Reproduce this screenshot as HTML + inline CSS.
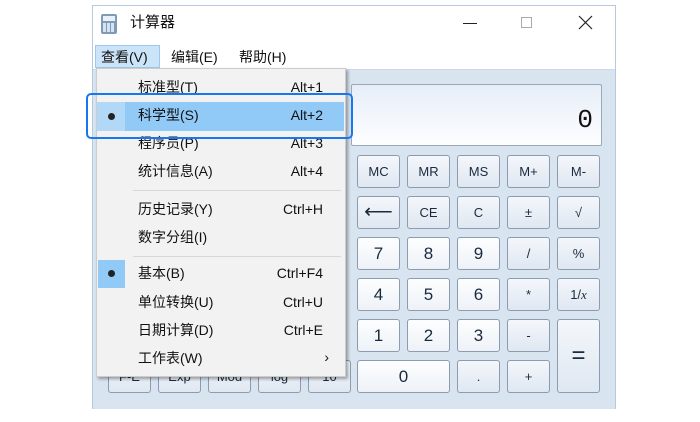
<!DOCTYPE html>
<html><head><meta charset="utf-8"><style>
*{margin:0;padding:0;box-sizing:border-box}
body{width:700px;height:422px;background:#fff;position:relative;overflow:hidden;font-family:"Liberation Sans","Noto Sans CJK SC",sans-serif;color:#111}
.a{position:absolute}
.win{left:92px;top:5px;width:524px;height:404px;border:1px solid #b9c9dd;background:#fff}
.body{left:93px;top:69px;width:522px;height:340px;background:#d9e4f1;border-top:1px solid #cfd9e6}
.disp{left:351px;top:84px;width:251px;height:62px;border:1px solid #9aa8bb;border-radius:2px;background:linear-gradient(#e7eef8,#fdfeff)}
.b{position:absolute;width:43px;height:33px;border:1px solid #8d9bb0;border-radius:3px;background:linear-gradient(#f4f7fb,#dfe7f1);font-size:13px;text-align:center;line-height:31px;color:#1a2a3f}
.n{background:linear-gradient(#fdfeff,#eef2f7);font-size:17px}
.menu{left:96px;top:68px;width:250px;height:309px;background:#f2f2f2;border:1px solid #cccccc;box-shadow:2px 2px 3px rgba(0,0,0,.35)}
.it{position:absolute;left:41px;font-size:14px;line-height:20px;height:20px;color:#111}
.sc{position:absolute;right:22px;font-size:14px;line-height:20px;height:20px;color:#111}
.sep{position:absolute;left:36px;width:208px;height:1px;background:#d7d7d7}
</style></head><body>
<div class="a win"></div>
<div class="a" style="left:101px;top:14px;width:16px;height:20px;background:#7f9bb8;border-radius:2px"></div>
<div class="a" style="left:103px;top:16px;width:12px;height:5px;background:#e8f1fa"></div>
<div class="a" style="left:103px;top:23px;width:12px;height:9px;background:repeating-linear-gradient(90deg,#d6e3f0 0 3px,#7f9bb8 3px 4px)"></div>
<div class="a" style="left:130px;top:13px;font-size:15px;line-height:20px">计算器</div>
<div class="a" style="left:463px;top:23px;width:14px;height:1px;background:#222"></div>
<div class="a" style="left:521px;top:17px;width:11px;height:11px;border:1px solid #aaa"></div>
<svg class="a" style="left:578px;top:15px" width="15" height="15"><path d="M1 1L14 14M14 1L1 14" stroke="#222" stroke-width="1.2"/></svg>
<div class="a" style="left:95px;top:45px;width:65px;height:23px;background:#cce4f7;border:1px solid #99c9ef"></div>
<div class="a" style="left:101px;top:47px;font-size:14px;line-height:20px">查看(V)</div>
<div class="a" style="left:171px;top:47px;font-size:14px;line-height:20px">编辑(E)</div>
<div class="a" style="left:239px;top:47px;font-size:14px;line-height:20px">帮助(H)</div>
<div class="a body"></div>
<div class="a disp"><div class="a" style="right:8px;top:20px;font-size:26px;line-height:30px;font-family:'Liberation Mono',monospace">0</div></div>
<div class="b" style="left:357px;top:155px">MC</div>
<div class="b" style="left:407px;top:155px">MR</div>
<div class="b" style="left:457px;top:155px">MS</div>
<div class="b" style="left:507px;top:155px">M+</div>
<div class="b" style="left:557px;top:155px">M-</div>
<div class="b" style="left:357px;top:196px;font-size:20px">⟵</div>
<div class="b" style="left:407px;top:196px">CE</div>
<div class="b" style="left:457px;top:196px">C</div>
<div class="b" style="left:507px;top:196px">±</div>
<div class="b" style="left:557px;top:196px">√</div>
<div class="b n" style="left:357px;top:237px">7</div>
<div class="b n" style="left:407px;top:237px">8</div>
<div class="b n" style="left:457px;top:237px">9</div>
<div class="b" style="left:507px;top:237px">/</div>
<div class="b" style="left:557px;top:237px">%</div>
<div class="b n" style="left:357px;top:278px">4</div>
<div class="b n" style="left:407px;top:278px">5</div>
<div class="b n" style="left:457px;top:278px">6</div>
<div class="b" style="left:507px;top:278px">*</div>
<div class="b" style="left:557px;top:278px">1/<i style="font-family:'Liberation Serif'">x</i></div>
<div class="b n" style="left:357px;top:319px">1</div>
<div class="b n" style="left:407px;top:319px">2</div>
<div class="b n" style="left:457px;top:319px">3</div>
<div class="b" style="left:507px;top:319px">-</div>
<div class="b" style="left:557px;top:319px;height:74px;line-height:72px;font-size:24px">=</div>
<div class="b n" style="left:357px;top:360px;width:93px">0</div>
<div class="b" style="left:457px;top:360px">.</div>
<div class="b" style="left:507px;top:360px">+</div>
<div class="b" style="left:108px;top:360px">F-E</div>
<div class="b" style="left:158px;top:360px">Exp</div>
<div class="b" style="left:208px;top:360px">Mod</div>
<div class="b" style="left:258px;top:360px">log</div>
<div class="b" style="left:308px;top:360px">10</div>
<div class="a menu">
<div class="it" style="top:8px">标准型(T)</div><div class="sc" style="top:8px">Alt+1</div>
<div class="a" style="left:0;top:33px;width:247px;height:29px;background:#91c9f7"></div>
<div class="a" style="left:0;top:33px;width:28px;height:29px;background:#b2d8f8"></div>
<div class="a" style="left:11px;top:44px;width:7px;height:7px;border-radius:50%;background:#222"></div>
<div class="it" style="top:36px">科学型(S)</div><div class="sc" style="top:36px">Alt+2</div>
<div class="it" style="top:64px">程序员(P)</div><div class="sc" style="top:64px">Alt+3</div>
<div class="it" style="top:92px">统计信息(A)</div><div class="sc" style="top:92px">Alt+4</div>
<div class="sep" style="top:121px"></div>
<div class="it" style="top:130px">历史记录(Y)</div><div class="sc" style="top:130px">Ctrl+H</div>
<div class="it" style="top:158px">数字分组(I)</div>
<div class="sep" style="top:187px"></div>
<div class="a" style="left:1px;top:191px;width:27px;height:28px;background:#91c9f7"></div>
<div class="a" style="left:11px;top:201px;width:7px;height:7px;border-radius:50%;background:#222"></div>
<div class="it" style="top:194px">基本(B)</div><div class="sc" style="top:194px">Ctrl+F4</div>
<div class="it" style="top:223px">单位转换(U)</div><div class="sc" style="top:223px">Ctrl+U</div>
<div class="it" style="top:251px">日期计算(D)</div><div class="sc" style="top:251px">Ctrl+E</div>
<div class="it" style="top:279px">工作表(W)</div><div class="sc" style="top:278px;right:16px">›</div>
</div>
<div class="a" style="left:86px;top:93px;width:267px;height:46px;border:2px solid #1677f0;border-radius:5px"></div>
</body></html>
